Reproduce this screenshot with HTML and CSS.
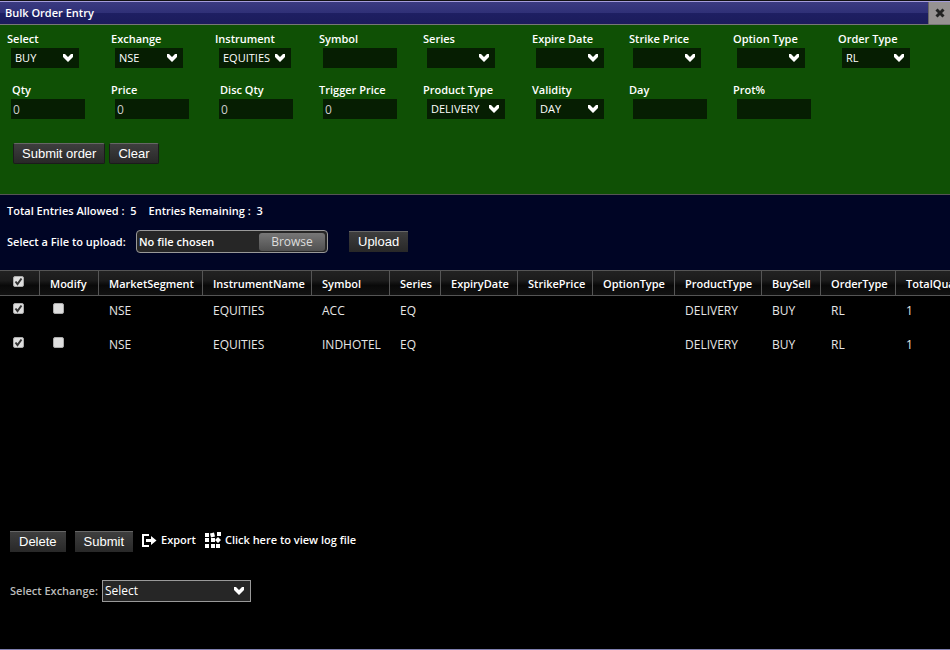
FILE: index.html
```html
<!DOCTYPE html>
<html lang="en">
<head>
  <meta charset="UTF-8" />
  <meta name="viewport" content="width=device-width, initial-scale=1" />
  <title>Bulk Order Entry</title>
  <link rel="stylesheet" href="styles.css">
</head>
<body>

  <header class="title-bar">
    <h1>Bulk Order Entry</h1>
    <button type="button" class="close-btn" aria-label="Close">
      <svg width="10" height="10" viewBox="0 0 10 10"><path d="M1.5 1.5L8.500 8.500M8.500 1.500L1.500 8.500" stroke="#222" stroke-width="3"/></svg>
    </button>
  </header>

  <!-- Order form -->
  <form class="order-form">
    <div class="fields">
      <div class="field"><label for="side">Select</label><select id="side"><option>BUY</option><option>SELL</option></select></div>
      <div class="field"><label for="exchange">Exchange</label><select id="exchange"><option>NSE</option><option>BSE</option></select></div>
      <div class="field"><label for="instrument">Instrument</label><select id="instrument" class="mid"><option>EQUITIES</option></select></div>
      <div class="field"><label for="symbol">Symbol</label><input type="text" id="symbol"></div>
      <div class="field"><label for="series">Series</label><select id="series"><option></option></select></div>
      <div class="field"><label for="expiry">Expire Date</label><select id="expiry"><option></option></select></div>
      <div class="field"><label for="strike">Strike Price</label><select id="strike"><option></option></select></div>
      <div class="field"><label for="option">Option Type</label><select id="option"><option></option></select></div>
      <div class="field"><label for="ordertype">Order Type</label><select id="ordertype"><option>RL</option></select></div>

      <div class="field"><label for="qty" class="indent">Qty</label><input type="text" id="qty" value="0"></div>
      <div class="field"><label for="price">Price</label><input type="text" id="price" value="0"></div>
      <div class="field"><label for="discqty" class="indent">Disc Qty</label><input type="text" id="discqty" value="0"></div>
      <div class="field"><label for="trigger">Trigger Price</label><input type="text" id="trigger" value="0"></div>
      <div class="field"><label for="product">Product Type</label><select id="product" class="wide"><option>DELIVERY</option></select></div>
      <div class="field"><label for="validity">Validity</label><select id="validity"><option>DAY</option></select></div>
      <div class="field"><label for="day">Day</label><input type="text" id="day"></div>
      <div class="field"><label for="prot">Prot%</label><input type="text" id="prot"></div>
    </div>
    <div class="form-buttons">
      <button type="submit" class="btn rounded">Submit order</button>
      <button type="reset" class="btn rounded">Clear</button>
    </div>
  </form>

  <!-- File upload -->
  <section class="upload">
    <p class="entries"><span>Total Entries Allowed :&nbsp; 5</span><span>Entries Remaining :&nbsp; 3</span></p>
    <div class="upload-row">
      <label for="file" class="file-label">Select a File to upload:</label>
      <label class="file-box">
        <input type="file" id="file">
        <span class="file-name">No file chosen</span>
        <span class="browse">Browse</span>
      </label>
      <button type="button" class="btn">Upload</button>
    </div>
  </section>

  <main class="orders">
    <table>
      <thead>
        <tr>
          <th><input type="checkbox" aria-label="Select all" checked></th>
          <th>Modify</th>
          <th>MarketSegment</th>
          <th>InstrumentName</th>
          <th>Symbol</th>
          <th>Series</th>
          <th>ExpiryDate</th>
          <th>StrikePrice</th>
          <th>OptionType</th>
          <th>ProductType</th>
          <th>BuySell</th>
          <th>OrderType</th>
          <th>TotalQuantity</th>
        </tr>
      </thead>
      <tbody>
        <tr>
          <td><input type="checkbox" aria-label="Select ACC" checked></td>
          <td><input type="checkbox" aria-label="Modify ACC"></td>
          <td>NSE</td>
          <td>EQUITIES</td>
          <td>ACC</td>
          <td>EQ</td>
          <td></td>
          <td></td>
          <td></td>
          <td>DELIVERY</td>
          <td>BUY</td>
          <td>RL</td>
          <td>1</td>
        </tr>
        <tr>
          <td><input type="checkbox" aria-label="Select INDHOTEL" checked></td>
          <td><input type="checkbox" aria-label="Modify INDHOTEL"></td>
          <td>NSE</td>
          <td>EQUITIES</td>
          <td>INDHOTEL</td>
          <td>EQ</td>
          <td></td>
          <td></td>
          <td></td>
          <td>DELIVERY</td>
          <td>BUY</td>
          <td>RL</td>
          <td>1</td>
        </tr>
      </tbody>
    </table>
  </main>

  <footer class="actions">
    <div class="action-row">
      <button type="button" class="btn">Delete</button>
      <button type="button" class="btn">Submit</button>
      <a href="#" class="link">
        <svg width="15" height="13" viewBox="0 0 15 13"><path d="M7 1H1V12H7" fill="none" stroke="#fff" stroke-width="2"/><path d="M4 5H9V2L14.500 6.500L9 11V8H4Z" fill="#fff"/></svg>
        Export
      </a>
      <a href="#" class="link">
        <svg width="16" height="16" viewBox="0 0 16 16" fill="#fff"><path d="M0 1h4v4H0zM0 6h4v4H0zM0 12h4v4H0zM6 6h4v4H6zM6 12h4v4H6zM11 12h4v4h-4zM5 1.500l4-1l1 4l-4 1zM12 0h4v4h-4zM13 5l3 3l-3 3l-3-3z"/></svg>
        Click here to view log file
      </a>
    </div>
    <div class="exchange-row">
      <label for="exchange2">Select Exchange:</label>
      <select id="exchange2" class="exchange-select"><option>Select</option><option>NSE</option><option>BSE</option></select>
    </div>
  </footer>

</body>
</html>
```
FILE: styles.css
```css
:root {
  --green: #0f5005;
  --field-bg: #061e02;
  --navy: #000525;
  --line: #555;
  --arrow: url("data:image/svg+xml,%3Csvg xmlns='http://www.w3.org/2000/svg' width='10' height='8' viewBox='0 0 10 8'%3E%3Cpath d='M0 0L2 0L5 3L8 0L10 0L10 3L5 8L0 3Z' fill='white'/%3E%3C/svg%3E");
}
* {
  box-sizing: border-box;
}
body {
  margin: 0;
  min-height: 100vh;
  display: flex;
  flex-direction: column;
  background: #000;
  color: #fff;
  font: 600 11px/16px "Open Sans", "Noto Sans", sans-serif;
  border-top: 1px solid #111;
  border-bottom: 1px solid #8080b0;
}
input, select, button {
  font: inherit;
  color: inherit;
  margin: 0;
}

/* title bar */
.title-bar {
  display: flex;
  justify-content: space-between;
  height: 24px;
  border-top: 1px solid #a49ddb;
  border-bottom: 1px solid #777;
  background: linear-gradient(#3a3a80, #2f3077 50%, #1e1f62 50%, #1b1c5c);
}
.title-bar h1 {
  margin: 0;
  padding-left: 5px;
  font: inherit;
  line-height: 22px;
}
.close-btn {
  width: 22px;
  display: flex;
  align-items: center;
  justify-content: center;
  padding: 0;
  border: 0;
  border-left: 1px solid #6a6868;
  background: #969292;
}

/* order form */
.order-form {
  height: 170px;
  padding: 6px 0 0 7px;
  background: var(--green);
  border-bottom: 1px solid var(--line);
}
.fields {
  display: grid;
  grid-template-columns: 104fr 104fr 104fr 104fr 109fr 97fr 104fr 105fr 112fr;
  row-gap: 14px;
}
.field {
  display: flex;
  flex-direction: column;
  align-items: flex-start;
}
.field label {
  line-height: 15px;
  padding-bottom: 2px;
}
.field .indent {
  padding-left: 5px;
}
.field input,
.field select {
  height: 20px;
  margin-left: 4px;
  border: 0;
  border-radius: 0;
  background-color: var(--field-bg);
  font-weight: 400;
}
.field input {
  width: 74px;
  padding: 0 2px;
  color: #ccc;
  font-size: 12px;
}
select {
  appearance: none;
  background: var(--arrow) no-repeat right 6px center;
}
.field select {
  width: 68px;
  padding: 0 0 0 4px;
}
.field select.mid {
  width: 72px;
}
.field select.wide {
  width: 78px;
}
.form-buttons {
  display: flex;
  gap: 4px;
  padding: 24px 0 0 6px;
}
.btn {
  height: 21px;
  padding: 0 9px;
  border: 0;
  border-top: 1px solid #666;
  background: linear-gradient(#3e3e3e, #282828);
  font: 13px/20px "Liberation Sans", Arial, sans-serif;
}
.btn.rounded {
  padding: 0 8px;
  border: 1px solid #1b1b1b;
  border-top-color: #666;
  border-radius: 2px;
}

/* upload */
.upload {
  height: 75px;
  padding: 8px 0 0 7px;
  background: var(--navy);
}
.entries {
  margin: 0 0 11px;
  display: flex;
  gap: 12px;
}
.upload-row {
  display: flex;
  align-items: center;
}
.file-label {
  width: 129px;
}
.file-box {
  display: flex;
  align-items: center;
  width: 192px;
  height: 23px;
  padding: 0 2px;
  margin-right: 21px;
  border: 1px solid #999;
  border-radius: 4px;
  background: #262626;
}
.file-box input {
  position: absolute;
  width: 1px;
  height: 1px;
  opacity: 0;
}
.file-name {
  flex: 1;
}
.browse {
  width: 66px;
  border-radius: 3px;
  background: linear-gradient(#777, #505050);
  color: #ddd;
  font-size: 12px;
  font-weight: 400;
  line-height: 18px;
  text-align: center;
}

/* orders table */
.orders {
  flex: 1;
  overflow: hidden;
}
table {
  width: 100%;
  min-width: 1000px;
  border-collapse: separate;
  border-spacing: 0;
  table-layout: fixed;
}
th, td {
  padding: 0 0 0 10px;
  text-align: left;
  white-space: nowrap;
}
th {
  height: 26px;
  padding-top: 2px;
  border: 1px solid var(--line);
  border-left: 0;
  background: linear-gradient(#222, #1b1b1b 40%, #090909 60%, #111);
  font-weight: 600;
}
td {
  height: 34px;
  padding-bottom: 4px;
  color: #e6e6e6;
  font-size: 12px;
  font-weight: 400;
}
th:first-child, td:first-child, td:nth-child(2) {
  padding-left: 13px;
}
th:nth-child(1) { width: 40px; }
th:nth-child(2) { width: 59px; }
th:nth-child(3) { width: 104px; }
th:nth-child(4) { width: 109px; }
th:nth-child(5) { width: 78px; }
th:nth-child(6) { width: 51px; }
th:nth-child(7) { width: 77px; }
th:nth-child(8) { width: 75px; }
th:nth-child(9) { width: 82px; }
th:nth-child(10) { width: 87px; }
th:nth-child(11) { width: 59px; }
th:nth-child(12) { width: 75px; }
input[type="checkbox"] {
  appearance: none;
  display: block;
  width: 11px;
  height: 11px;
  margin-bottom: 6px;
  border: 1px solid #aaa;
  border-radius: 2px;
  background: #dedede;
}
input[type="checkbox"]:checked {
  background: #dedede url("data:image/svg+xml,%3Csvg xmlns='http://www.w3.org/2000/svg' viewBox='0 0 9 9'%3E%3Cpath d='M1.500 4.500L3.500 7L7.500 1.500' fill='none' stroke='%23333' stroke-width='2'/%3E%3C/svg%3E") center / 9px no-repeat;
}

/* bottom actions */
.actions {
  padding: 0 10px 47px;
}
.action-row {
  display: flex;
  align-items: flex-start;
  gap: 9px;
}
.link {
  display: flex;
  align-items: center;
  gap: 4px;
  line-height: 18px;
  color: #fff;
  text-decoration: none;
}
.exchange-row {
  display: flex;
  align-items: center;
  gap: 4px;
  margin-top: 28px;
  color: #bbb;
}
.exchange-select {
  width: 149px;
  height: 22px;
  padding: 0 2px;
  border: 1px solid #999;
  border-radius: 0;
  background-color: #262626;
  color: #fff;
  font-size: 12px;
  font-weight: 400;
}
```
